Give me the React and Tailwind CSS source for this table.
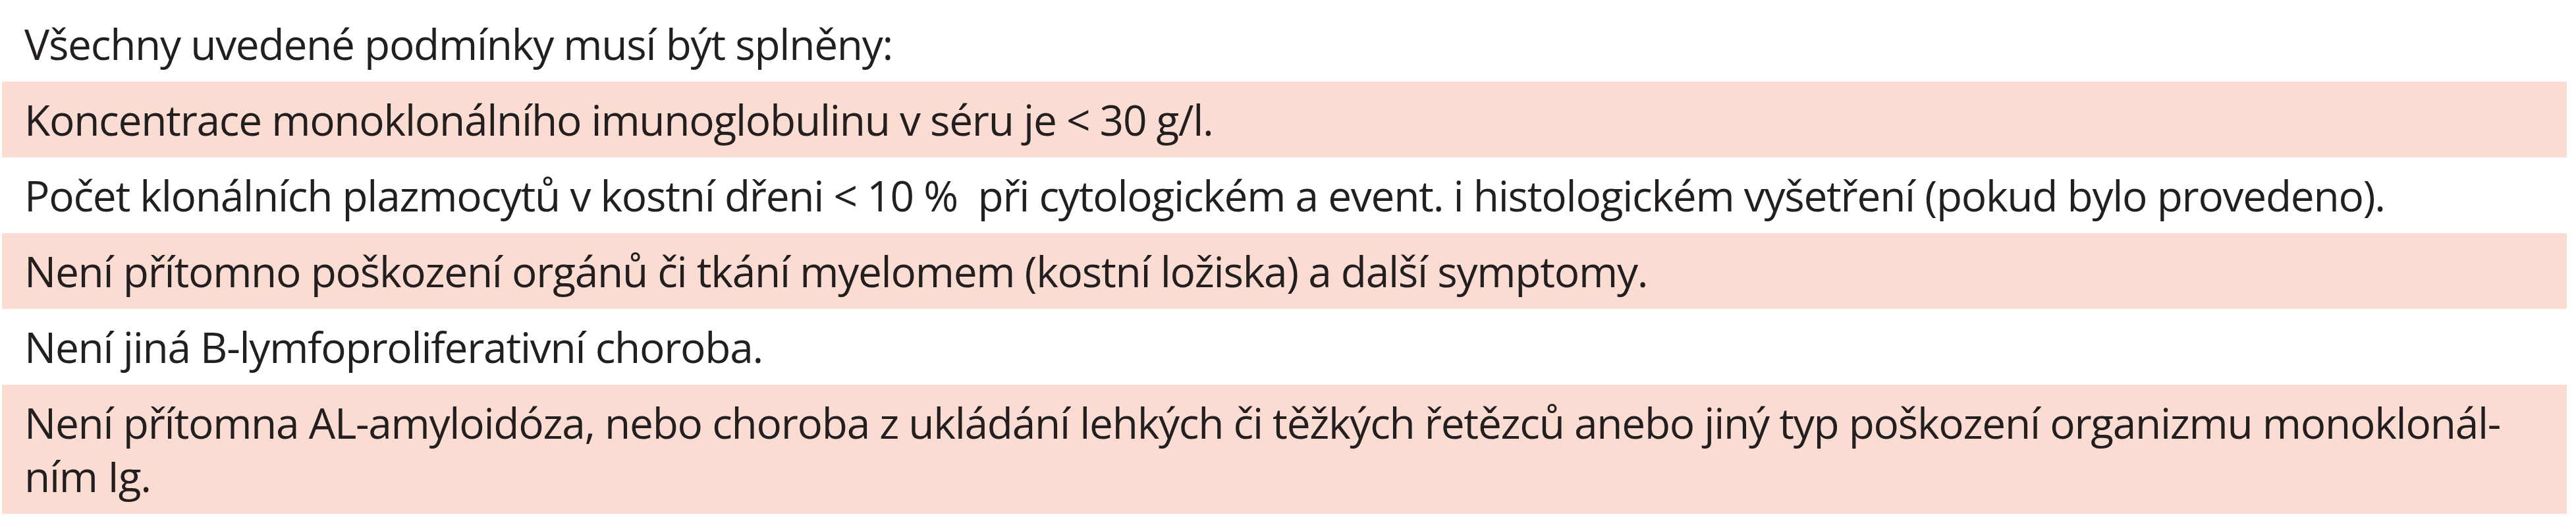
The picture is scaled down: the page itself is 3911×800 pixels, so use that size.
export default function App() {
  const rows = [
    { text: "Koncentrace monoklonálního imunoglobulinu v séru je < 30 g/l.", pink: true },
    {
      text: "Počet klonálních plazmocytů v kostní dřeni < 10 %\u00a0 při cytologickém a event. i histologickém vyšetření (pokud bylo provedeno).",
      pink: false,
    },
    {
      text: "Není přítomno poškození orgánů či tkání myelomem (kostní ložiska) a další symptomy.",
      pink: true,
    },
    { text: "Není jiná B-lymfoproliferativní choroba.", pink: false },
  ];

  return (
    <div className="w-[3911px] h-[800px] bg-white font-['Open_Sans','Noto_Sans',sans-serif] text-[#231f20] text-[64px] leading-[81px] tracking-[-0.02em]">
      <div className="ml-[3px] w-[3894px] flex flex-col">
        <div className="pt-[26px] pb-[17px] pl-[34px]">Všechny uvedené podmínky musí být splněny:</div>

        {rows.map((row, i) => (
          <div
            key={i}
            className={`py-[17px] pl-[34px] ${row.pink ? "bg-[#fbdcd2]" : "bg-white"}`}
          >
            {row.text}
          </div>
        ))}

        {/* last row wraps with a hyphen in the original */}
        <div className="py-[17px] pl-[34px] bg-[#fbdcd2]">
          Není přítomna AL-amyloidóza, nebo choroba z ukládání lehkých či těžkých řetězců anebo jiný typ poškození organizmu monoklonál-
          <br />
          ním Ig.
        </div>
      </div>
    </div>
  );
}
